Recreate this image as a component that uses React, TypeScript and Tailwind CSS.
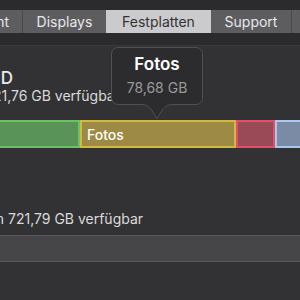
import React from 'react';

const tabs = [
  { label: 'Übersicht', w: 'w-[22px]', align: 'justify-end pr-[13px]', active: false },
  { label: 'Displays', w: 'w-[84px]', align: 'justify-center', active: false },
  { label: 'Festplatten', w: 'w-[105px]', align: 'justify-center', active: true },
  { label: 'Support', w: 'w-[80px]', align: 'justify-center', active: false },
  { label: 'Service', w: 'w-[60px]', align: 'justify-start pl-[14px]', active: false },
];

function Tooltip() {
  return (
    <div className="absolute left-[111px] top-[47px] w-[92px]">
      <div className="h-[58px] rounded-[7px] border border-[#505053] bg-[#2c2c2e] flex flex-col items-center pt-[6px]">
        <span className="text-[17px] leading-[20px] font-semibold text-white">Fotos</span>
        <span className="mt-[5px] text-[14px] leading-[18px] text-[#9a9a9c]">78,68 GB</span>
      </div>
      {/* arrow */}
      <svg className="absolute left-[30px] top-[56px]" width="32" height="18" viewBox="0 0 32 18">
        <path d="M0 1.5 C6 1.5 9 4 12 9 L16 15.5 L20 9 C23 4 26 1.5 32 1.5 Z" fill="#2c2c2e" />
        <rect x="0" y="0" width="32" height="2" fill="#2c2c2e" />
        <path d="M0 1.5 C6 1.5 9 4 12 9 L16 15.5 L20 9 C23 4 26 1.5 32 1.5" fill="none" stroke="#505053" strokeWidth="1" />
      </svg>
    </div>
  );
}

export default function App() {
  return (
    <div className="w-[300px] h-[300px] overflow-hidden relative bg-[#323234] font-['Inter',sans-serif] text-[#e6e6e7]">
      {/* header with segmented tabs */}
      <div className="h-[46px] bg-[#2b2b2d] pt-[10px] border-b border-[#38383a]">
        <div className="flex h-[23px]">
          {tabs.map((t, i) => (
            <div
              key={t.label}
              className={`${t.w} shrink-0 flex items-center whitespace-nowrap overflow-visible text-[14px] ${t.align} ${
                t.active ? 'bg-[#cbcbcd] text-[#333335]' : 'bg-[#5d5d60] text-[#e8e8e9]'
              } ${i > 0 && !t.active && !tabs[i - 1].active ? 'border-l border-[#4a4a4d]' : ''}`}
            >
              {t.label}
            </div>
          ))}
        </div>
      </div>

      {/* content */}
      <div className="flex flex-col">
        <div className="mt-[22px] flex whitespace-nowrap">
          <div className="w-[13px] shrink-0 flex justify-end text-[17px] leading-[20px] font-medium text-[#ececed]">
            Macintosh HD
          </div>
        </div>
        <div className="flex whitespace-nowrap text-[14px] leading-[16px] text-[#dadadb]">
          <span className="-ml-[15px]">721,76 GB verfügbar von 1 TB</span>
        </div>

        {/* storage bar */}
        <div className="mt-[16px] flex h-[28px] -ml-[12px]">
          <div className="w-[92px] shrink-0 bg-[#5a9357] border-2 border-[#6cc06a]" />
          <div className="w-[156px] shrink-0 bg-[#9d8b45] border-2 border-[#d2ba3c] flex items-center pl-[5px] text-[14px] font-medium text-white">
            Fotos
          </div>
          <div className="w-[39px] shrink-0 bg-[#9a4a57] border-2 border-[#e0506a]" />
          <div className="w-[40px] shrink-0 bg-[#7b8ba6] border-2 border-[#a8c8f0]" />
        </div>

        <div className="mt-[63px] flex whitespace-nowrap text-[14px] leading-[16px] text-[#dadadb]">
          <div className="w-[4px] shrink-0 flex justify-end">Time Machine von</div>
          <span className="ml-[4px]">721,79 GB verfügbar</span>
        </div>

        <div className="mt-[8px] h-[27px] bg-[#464649] border-y border-[#59595c]" />
      </div>

      <Tooltip />
    </div>
  );
}
